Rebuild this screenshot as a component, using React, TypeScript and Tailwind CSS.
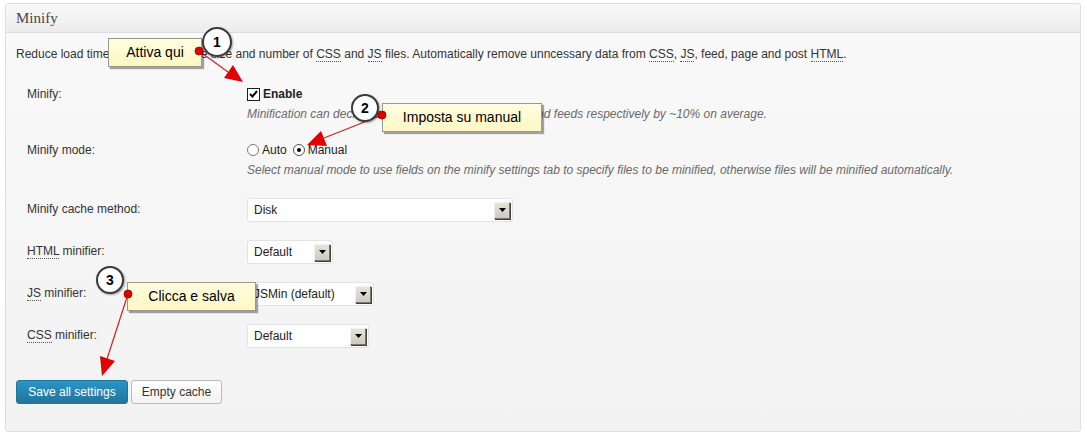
import type { ReactNode } from "react";

const font = "font-['Liberation_Sans',Arial,sans-serif]";

const Abbr = ({ children }: { children: ReactNode }) => (
  <span className="border-b border-dotted border-[#555] leading-[12px]">{children}</span>
);

const SelectBox = ({ value, width }: { value: string; width: string }) => (
  <div
    className={`${width} h-[24px] flex items-center justify-between bg-white border border-[#e3e3e3] rounded-[3px] pl-[6px] pr-[2px]`}
  >
    <span className="text-[12px] text-[#222]">{value}</span>
    <span className="w-[16px] h-[17px] flex items-center justify-center bg-gradient-to-b from-[#e6e3dc] to-[#cfcac0] border border-t-[#f4f2ee] border-l-[#f4f2ee] border-r-[#7a7870] border-b-[#7a7870] shadow-[1px_1px_0_#404040]">
      <svg width="7" height="4" viewBox="0 0 7 4">
        <path d="M0 0h7L3.5 4z" fill="#000" />
      </svg>
    </span>
  </div>
);

const Row = ({ label, children, className }: { label: ReactNode; children: ReactNode; className?: string }) => (
  <div className={`flex ${className ?? ""}`}>
    <div className="w-[231px] pl-[11px] text-[12px] leading-[16px] text-[#333]">{label}</div>
    <div className="flex-1">{children}</div>
  </div>
);

const Callout = ({ text, className }: { text: string; className: string }) => (
  <div
    className={`absolute h-[29px] flex items-center justify-center bg-gradient-to-b from-[#fffde0] to-[#fff8c4] border border-[#9a9a8a] shadow-[2px_2px_1px_rgba(0,0,0,0.35)] text-[14px] text-black ${className}`}
  >
    {text}
  </div>
);

const Badge = ({ n, className }: { n: number; className: string }) => (
  <div
    className={`absolute rounded-full bg-white border-2 border-[#3a3a3a] flex items-center justify-center text-[14px] font-bold text-black shadow-[1px_1px_2px_rgba(0,0,0,0.35)] ${className}`}
  >
    {n}
  </div>
);

export default function App() {
  return (
    <div className={`relative w-[1087px] h-[440px] bg-white pt-[3px] pl-[5px] ${font}`}>
      <div className="w-[1076px] h-[429px] border border-[#dfdfdf] rounded-[3px] overflow-hidden flex flex-col">
        {/* header */}
        <div className="h-[29px] shrink-0 border-b border-[#dfdfdf] bg-gradient-to-b from-[#f9f9f9] to-[#ececec] px-[10px] flex items-center">
          <h3 className="font-['Liberation_Serif',Georgia,serif] text-[15px] text-[#464646] pt-[1px]">Minify</h3>
        </div>

        {/* body */}
        <div className="flex-1 bg-gradient-to-b from-[#f9f9f9] to-[#f2f2f2] px-[10px]">
          <p className="mt-[13px] text-[12px] leading-[16px] text-[#333]">
            Reduce load time by decreasing the size and number of <Abbr>CSS</Abbr> and <Abbr>JS</Abbr> files.
            Automatically remove unncessary data from <Abbr>CSS</Abbr>, <Abbr>JS</Abbr>, feed, page and post{" "}
            <Abbr>HTML</Abbr>.
          </p>

          <Row label="Minify:" className="mt-[24px]">
            <label className="flex items-center gap-[3px] text-[12px] leading-[16px] font-bold text-[#222]">
              <span className="w-[13px] h-[13px] border border-[#1c1c1c] bg-white flex items-center justify-center">
                <svg width="9" height="8" viewBox="0 0 9 8">
                  <path d="M1 4l2.5 2.5L8 1" stroke="#000" strokeWidth="2" fill="none" />
                </svg>
              </span>
              Enable
            </label>
            <p className="mt-[4px] text-[12px] leading-[16px] italic text-[#6a6a6a]">
              Minification can decrease file size of HTML, CSS, JS and feeds respectively by ~10% on average.
            </p>
          </Row>

          <Row label="Minify mode:" className="mt-[20px]">
            <div className="flex items-center text-[12px] leading-[16px] text-[#222]">
              <span className="w-[12px] h-[12px] rounded-full border border-[#777] bg-white" />
              <span className="ml-[3px]">Auto</span>
              <span className="ml-[6px] w-[12px] h-[12px] rounded-full border border-[#555] bg-white flex items-center justify-center">
                <span className="w-[4px] h-[4px] rounded-full bg-black" />
              </span>
              <span className="ml-[3px]">Manual</span>
            </div>
            <p className="mt-[4px] text-[12px] leading-[16px] italic text-[#6a6a6a]">
              Select manual mode to use fields on the minify settings tab to specify files to be minified, otherwise
              files will be minified automatically.
            </p>
          </Row>

          <Row label={<span className="block pt-[3px]">Minify cache method:</span>} className="mt-[20px]">
            <SelectBox value="Disk" width="w-[266px]" />
          </Row>

          <Row
            label={
              <span className="block pt-[3px]">
                <Abbr>HTML</Abbr> minifier:
              </span>
            }
            className="mt-[18px]"
          >
            <SelectBox value="Default" width="w-[86px]" />
          </Row>

          <Row
            label={
              <span className="block pt-[3px]">
                <Abbr>JS</Abbr> minifier:
              </span>
            }
            className="mt-[18px]"
          >
            <SelectBox value="JSMin (default)" width="w-[127px]" />
          </Row>

          <Row
            label={
              <span className="block pt-[3px]">
                <Abbr>CSS</Abbr> minifier:
              </span>
            }
            className="mt-[18px]"
          >
            <SelectBox value="Default" width="w-[122px]" />
          </Row>

          <div className="mt-[32px] flex gap-[3px]">
            <button className="h-[24px] w-[112px] rounded-[3px] border border-[#21759b] bg-gradient-to-b from-[#2a95c5] to-[#21759b] text-[12px] text-white">
              Save all settings
            </button>
            <button className="h-[24px] w-[91px] rounded-[3px] border border-[#bbb] bg-gradient-to-b from-white to-[#f2f2f2] text-[12px] text-[#333]">
              Empty cache
            </button>
          </div>
        </div>
      </div>

      {/* annotations */}
      <svg className="absolute left-0 top-0 pointer-events-none" width="1087" height="440">
        <line x1="199" y1="51" x2="228" y2="72" stroke="#d42020" strokeWidth="1.2" />
        <polygon points="243,82 224,78 233,65" fill="#e00000" />
        <line x1="382" y1="115" x2="324" y2="138" stroke="#d42020" strokeWidth="1.2" />
        <polygon points="307,145 321,131 327,146" fill="#e00000" />
        <line x1="128" y1="294" x2="107" y2="359" stroke="#d42020" strokeWidth="1.2" />
        <polygon points="102,376 100,356 115,361" fill="#e00000" />
      </svg>

      <Callout text="Attiva qui" className="left-[108px] top-[38px] w-[94px]" />
      <Callout text="Imposta su manual" className="left-[382px] top-[103px] w-[160px]" />
      <Callout text="Clicca e salva" className="left-[127px] top-[282px] w-[129px]" />

      <Badge n={1} className="left-[202px] top-[27px] w-[30px] h-[30px]" />
      <Badge n={2} className="left-[351px] top-[94px] w-[28px] h-[28px]" />
      <Badge n={3} className="left-[96px] top-[266px] w-[28px] h-[28px]" />

      <svg className="absolute left-0 top-0 pointer-events-none" width="1087" height="440">
        <circle cx="199" cy="51" r="4" fill="#e00000" stroke="#900" strokeWidth="0.8" />
        <circle cx="382" cy="115" r="4" fill="#e00000" stroke="#900" strokeWidth="0.8" />
        <circle cx="128" cy="294" r="4" fill="#e00000" stroke="#900" strokeWidth="0.8" />
      </svg>
    </div>
  );
}
